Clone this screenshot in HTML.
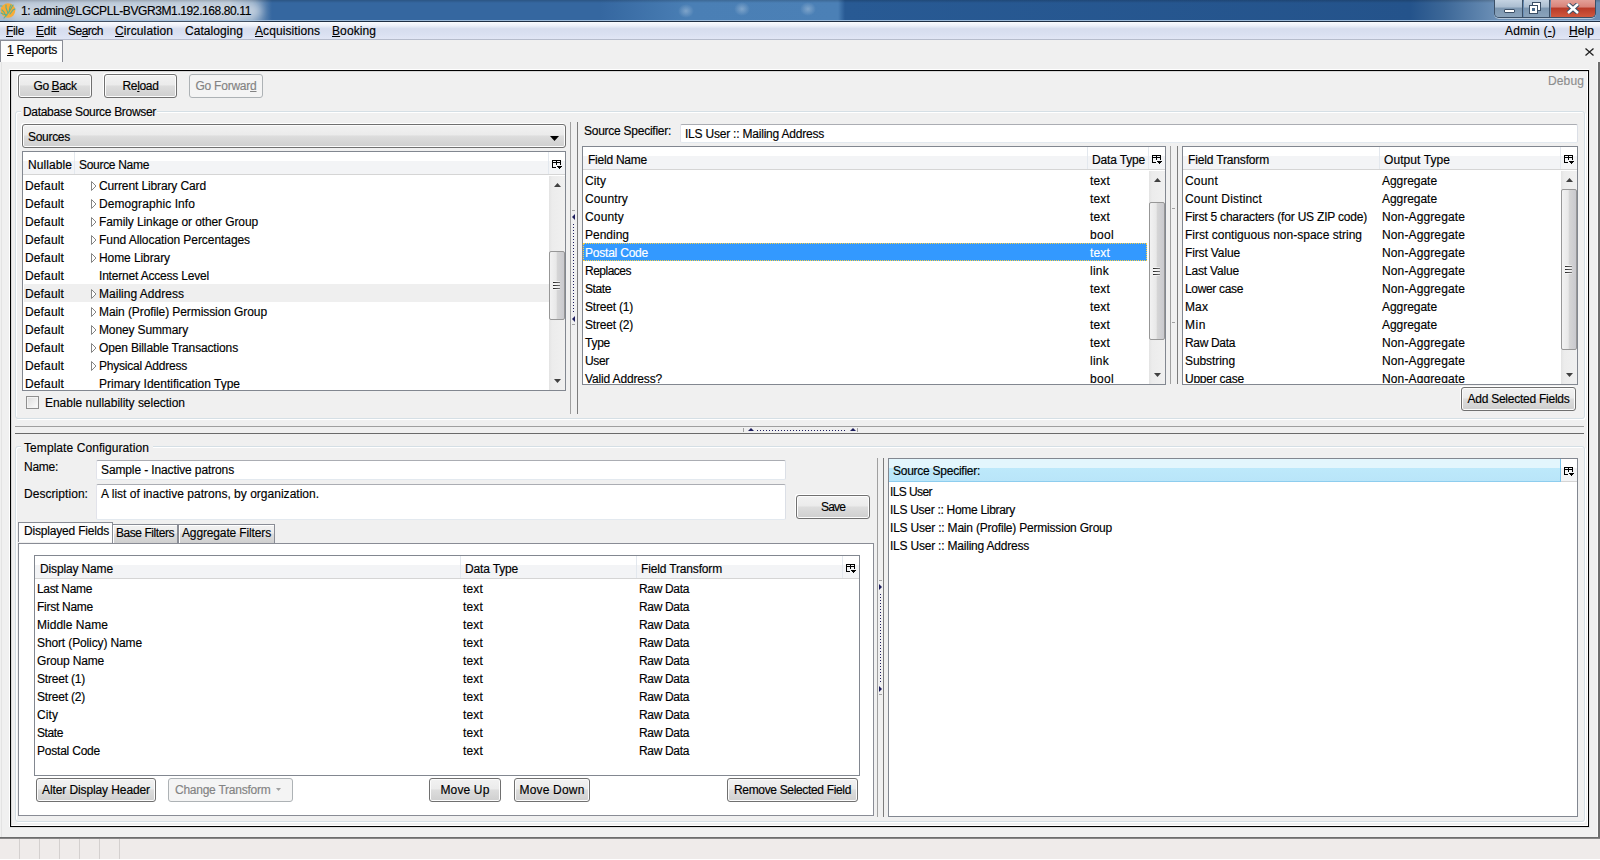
<!DOCTYPE html><html><head><meta charset="utf-8"><title>Reports</title><style>
*{margin:0;padding:0;box-sizing:border-box}
html,body{width:1600px;height:860px;overflow:hidden;background:#f0f0f0;font-family:"Liberation Sans",sans-serif;font-size:12px;color:#000;-webkit-text-stroke:0.15px currentColor}
.a{position:absolute}
.t{position:absolute;white-space:nowrap;line-height:14px;font-size:12px}
.u{text-decoration:underline}
.btn{border:1px solid #707070;border-radius:3px;background:linear-gradient(#f2f2f2 0%,#ebebeb 45%,#dddddd 50%,#cfcfcf 100%);box-shadow:inset 0 0 0 1px #fcfcfc, -1px -1px 0 #fff;text-align:center;white-space:nowrap;font-size:12px}
.btn.dis{border-color:#adb2b5;background:#f4f4f4;color:#838383;box-shadow:none}
.tree{background:#fff;border:1px solid #828790}
.hdr{background:linear-gradient(#fff 0%,#fff 40%,#f3f4f6 40%,#f3f4f6 100%);border-bottom:1px solid #d5d5d5}
.grp{border:1px solid #d5dfe5;border-radius:3px;box-shadow:1px 1px 0 #fff, inset 1px 1px 0 #fff}
.tb{background:#fff;border:1px solid;border-color:#abadb3 #dbdfe6 #e3e9ef #e2e3ea;border-radius:2px}
.sbtrack{background:linear-gradient(90deg,#e3e3e3 0,#ececec 3px,#f0f0f0 100%)}
.sbthumb{border:1px solid #979797;border-radius:2px;background:linear-gradient(90deg,#f2f2f2 0%,#e8e8e8 45%,#d6d6d6 50%,#c9c9ce 100%)}
.sel{background:#3399ff;color:#fff;outline:1px dotted #ffd040;outline-offset:-1px}
.dots{background-image:linear-gradient(90deg,#1c1c5c 1px,transparent 1px);background-size:3px 1px}
.vdots{background-image:linear-gradient(#1c1c5c 1px,transparent 1px);background-size:1px 3px}
</style></head><body>
<div class="a" style="left:0;top:0;width:1600px;height:22px;background:linear-gradient(90deg,#a9b9cb 0,#b4c3d3 230px,#8aa5c2 252px,#3567a0 272px,#3567a0 600px,#4a7fb5 690px,#4b80b6 838px,#285a94 845px,#24538b 1410px,#3d6898 1445px,#6a8eb5 1494px)"></div>
<div class="a" style="left:0;top:0;width:1600px;height:20px;background:linear-gradient(rgba(0,0,0,0.18) 0,rgba(0,0,0,0) 3px)"></div>
<div class="a" style="left:678px;top:4px;width:16px;height:14px;border-radius:50%;background:radial-gradient(rgba(170,195,220,0.55),rgba(170,195,220,0) 70%)"></div>
<div class="a" style="left:734px;top:2px;width:16px;height:14px;border-radius:50%;background:radial-gradient(rgba(170,195,220,0.55),rgba(170,195,220,0) 70%)"></div>
<div class="a" style="left:800px;top:2px;width:16px;height:14px;border-radius:50%;background:radial-gradient(rgba(170,195,220,0.55),rgba(170,195,220,0) 70%)"></div>
<div class="a " style="left:0px;top:20px;width:1600px;height:1px;background:#9bb9d8"></div>
<div class="a " style="left:0px;top:21px;width:1600px;height:1px;background:#1f2f44"></div>
<div class="a" style="left:10px;top:3px;width:252px;height:16px;border-radius:8px;background:rgba(215,224,233,0.7);filter:blur(4px)"></div>
<svg class="a" style="left:0px;top:3px" width="17" height="17" viewBox="0 0 17 17"><circle cx="8" cy="7.5" r="7.3" fill="#f8ab36"/><g stroke="#5caf8e" stroke-width="1.1" fill="none" stroke-linecap="round"><path d="M4 15L9 9L13 2"/><path d="M6 13L4 9L2 7"/><path d="M8 10L6 5L6 2"/><path d="M9 9L10 4L11 2"/><path d="M10 11L13 7L15 6"/><path d="M7 12L3 11L1 10"/><path d="M0 3L2 3"/></g></svg>
<div class="t " style="left:21px;top:4px;letter-spacing:-0.127px;color:#000;letter-spacing:-0.4px">1: admin@LGCPLL-BVGR3M1.192.168.80.11</div>
<div class="a" style="left:1494px;top:-1px;width:102px;height:19px;border:1px solid #3b4f66;border-top:none;border-radius:0 0 5px 5px;overflow:hidden;box-shadow:0 1px 0 rgba(255,255,255,0.5)"><div class="a" style="left:0;top:0;width:28px;height:18px;background:linear-gradient(#c8d6e4 0%,#aabdd0 45%,#7d97b1 50%,#8aa3bb 100%);border-right:1px solid #3b4f66"></div><div class="a" style="left:29px;top:0;width:26px;height:18px;background:linear-gradient(#c8d6e4 0%,#aabdd0 45%,#7d97b1 50%,#8aa3bb 100%);border-right:1px solid #3b4f66"></div><div class="a" style="left:56px;top:0;width:46px;height:18px;background:linear-gradient(#e4a49c 0%,#d98278 45%,#b83a28 50%,#d0583e 100%)"></div></div>
<div class="a " style="left:1504px;top:9px;width:11px;height:4px;background:#fff;border:1px solid #3b4f66;border-radius:1px"></div>
<svg class="a" style="left:1529px;top:2px" width="13" height="13" viewBox="0 0 13 13"><rect x="3.5" y="0.5" width="8" height="8" fill="#fff" stroke="#3b4f66"/><rect x="0.5" y="3.5" width="8" height="8" fill="#fff" stroke="#3b4f66"/><rect x="3" y="6" width="3" height="3" fill="#4a6a8a"/></svg>
<svg class="a" style="left:1566px;top:3px" width="14" height="11" viewBox="0 0 14 11"><path d="M2 1L12 10M12 1L2 10" stroke="#3b4f66" stroke-width="4.5"/><path d="M2 1L12 10M12 1L2 10" stroke="#fff" stroke-width="2.5"/></svg>
<div class="a" style="left:0;top:22px;width:1600px;height:18px;background:linear-gradient(#fbfcfe 0%,#eef1f9 20%,#d6ddee 40%,#dae0f1 70%,#e1e6f5 100%);border-bottom:1px solid #b6bccc"></div>
<div class="t " style="left:6px;top:24px;letter-spacing:-0.336px;"><span class="u">F</span>ile</div>
<div class="t " style="left:36px;top:24px;letter-spacing:-0.168px;"><span class="u">E</span>dit</div>
<div class="t " style="left:68px;top:24px;letter-spacing:-0.503px;">Se<span class="u">a</span>rch</div>
<div class="t " style="left:115px;top:24px;letter-spacing:0.118px;"><span class="u">C</span>irculation</div>
<div class="t " style="left:185px;top:24px;letter-spacing:0.062px;">Catalo<span class="u">g</span>ing</div>
<div class="t " style="left:255px;top:24px;letter-spacing:0.081px;"><span class="u">A</span>cquisitions</div>
<div class="t " style="left:332px;top:24px;letter-spacing:0.092px;"><span class="u">B</span>ooking</div>
<div class="t " style="left:1505px;top:24px;letter-spacing:0.184px;">Admin (<span class="u">-</span>)</div>
<div class="t " style="left:1569px;top:24px;letter-spacing:0.078px;"><span class="u">H</span>elp</div>
<div class="a " style="left:0px;top:40px;width:63px;height:22px;background:#fcfcfc;border:1px solid #898c95;border-bottom:none"></div>
<div class="t " style="left:7px;top:43px;letter-spacing:-0.224px;"><span class="u">1</span> Reports</div>
<svg class="a" style="left:1585px;top:48px" width="9" height="8" viewBox="0 0 9 8"><path d="M0.5 0.5L8.5 7.5M8.5 0.5L0.5 7.5" stroke="#222" stroke-width="1.3"/></svg>
<div class="a " style="left:1px;top:62px;width:1px;height:775px;background:#e3e3e3"></div>
<div class="a " style="left:1598px;top:62px;width:2px;height:776px;background:#6d6d6d"></div>
<div class="a " style="left:1597px;top:62px;width:1px;height:775px;background:#f8f8f8"></div>
<div class="a " style="left:0px;top:837px;width:1600px;height:2px;background:linear-gradient(#6d6d6d 50%,#858585 50%)"></div>
<div class="a " style="left:0px;top:839px;width:1600px;height:20px;background:#efebea"></div>
<div class="a " style="left:0px;top:859px;width:1600px;height:1px;background:#ffffff"></div>
<div class="a " style="left:19px;top:839px;width:1px;height:20px;background:#d4d0cf"></div>
<div class="a " style="left:39px;top:839px;width:1px;height:20px;background:#d4d0cf"></div>
<div class="a " style="left:59px;top:839px;width:1px;height:20px;background:#d4d0cf"></div>
<div class="a " style="left:79px;top:839px;width:1px;height:20px;background:#d4d0cf"></div>
<div class="a " style="left:99px;top:839px;width:1px;height:20px;background:#d4d0cf"></div>
<div class="a " style="left:119px;top:839px;width:1px;height:20px;background:#d4d0cf"></div>
<div class="a " style="left:9px;top:69px;width:1581px;height:759px;border:1px solid;border-color:#fff #e0e0e0 #e0e0e0 #fff"></div>
<div class="a " style="left:10px;top:70px;width:1579px;height:757px;border:1px solid #000"></div>
<div class="a " style="left:11px;top:71px;width:1577px;height:755px;border:1px solid;border-color:#d8d8d8 #fff #fff #d8d8d8"></div>
<div class="a btn" style="left:18px;top:74px;width:74px;height:24px;line-height:22px;letter-spacing:-0.429px;">Go <span class="u">B</span>ack</div>
<div class="a btn" style="left:104px;top:74px;width:73px;height:24px;line-height:22px;letter-spacing:-0.339px;">Re<span class="u">l</span>oad</div>
<div class="a btn dis" style="left:189px;top:74px;width:74px;height:24px;line-height:22px;letter-spacing:-0.234px;">Go Forwar<span class="u">d</span></div>
<div class="t " style="left:1548px;top:74px;letter-spacing:0.128px;color:#8d8d8d">Debug</div>
<div class="a grp" style="left:15px;top:111px;width:1570px;height:308px;"></div>
<div class="a " style="left:21px;top:104px;width:136px;height:14px;background:#f0f0f0"></div>
<div class="t " style="left:23px;top:105px;letter-spacing:-0.306px;">Database Source Browser</div>
<div class="a btn" style="left:22px;top:124px;width:544px;height:24px;text-align:left;padding-left:5px;line-height:24px;letter-spacing:-0.3px">Sources</div>
<svg class="a" style="left:550px;top:136px" width="9" height="5" viewBox="0 0 9 5"><path d="M0 0h9L4.5 5z" fill="#000"/></svg>
<div class="a tree" style="left:22px;top:151px;width:544px;height:240px;"></div>
<div class="a hdr" style="left:23px;top:152px;width:542px;height:23px"></div>
<div class="t " style="left:28px;top:158px;letter-spacing:0.078px;">Nullable</div>
<div class="a " style="left:74px;top:152px;width:1px;height:22px;background:#e3e8ee"></div>
<div class="t " style="left:79px;top:158px;letter-spacing:-0.305px;">Source Name</div>
<div class="a " style="left:548px;top:152px;width:1px;height:22px;background:#e3e8ee"></div>
<svg class="a" style="left:552px;top:160px" width="10" height="9" viewBox="0 0 10 9" shape-rendering="crispEdges"><path d="M0 0h9v1H0zM0 2h9v1H0zM0 0h1v8H0zM4 0h1v5H4zM8 0h1v5H8zM0 7h4v1H0z" fill="#000"/><path d="M5 6h5v1H5zM6 7h3v1H6zM7 8h1v1H7z" fill="#000"/></svg>
<div class="a" style="left:23px;top:176px;width:526px;height:214px;overflow:hidden">
<div class="t" style="left:2px;top:3px;letter-spacing:0.141px;">Default</div>
<svg class="a" style="left:68px;top:5px" width="6" height="10" viewBox="0 0 6 10"><path d="M0.5 0.5L5 5L0.5 9.5z" fill="#fff" stroke="#848484"/></svg>
<div class="t" style="left:76px;top:3px;letter-spacing:-0.119px;">Current Library Card</div>
<div class="t" style="left:2px;top:21px;letter-spacing:0.141px;">Default</div>
<svg class="a" style="left:68px;top:23px" width="6" height="10" viewBox="0 0 6 10"><path d="M0.5 0.5L5 5L0.5 9.5z" fill="#fff" stroke="#848484"/></svg>
<div class="t" style="left:76px;top:21px;letter-spacing:0.081px;">Demographic Info</div>
<div class="t" style="left:2px;top:39px;letter-spacing:0.141px;">Default</div>
<svg class="a" style="left:68px;top:41px" width="6" height="10" viewBox="0 0 6 10"><path d="M0.5 0.5L5 5L0.5 9.5z" fill="#fff" stroke="#848484"/></svg>
<div class="t" style="left:76px;top:39px;letter-spacing:-0.105px;">Family Linkage or other Group</div>
<div class="t" style="left:2px;top:57px;letter-spacing:0.141px;">Default</div>
<svg class="a" style="left:68px;top:59px" width="6" height="10" viewBox="0 0 6 10"><path d="M0.5 0.5L5 5L0.5 9.5z" fill="#fff" stroke="#848484"/></svg>
<div class="t" style="left:76px;top:57px;letter-spacing:-0.064px;">Fund Allocation Percentages</div>
<div class="t" style="left:2px;top:75px;letter-spacing:0.141px;">Default</div>
<svg class="a" style="left:68px;top:77px" width="6" height="10" viewBox="0 0 6 10"><path d="M0.5 0.5L5 5L0.5 9.5z" fill="#fff" stroke="#848484"/></svg>
<div class="t" style="left:76px;top:75px;letter-spacing:-0.086px;">Home Library</div>
<div class="t" style="left:2px;top:93px;letter-spacing:0.141px;">Default</div>
<div class="t" style="left:76px;top:93px;letter-spacing:-0.192px;">Internet Access Level</div>
<div class="a" style="left:1px;top:108px;width:525px;height:18px;background:#efefef"></div>
<div class="t" style="left:2px;top:111px;letter-spacing:0.141px;">Default</div>
<svg class="a" style="left:68px;top:113px" width="6" height="10" viewBox="0 0 6 10"><path d="M0.5 0.5L5 5L0.5 9.5z" fill="#fff" stroke="#848484"/></svg>
<div class="t" style="left:76px;top:111px;letter-spacing:0.019px;">Mailing Address</div>
<div class="t" style="left:2px;top:129px;letter-spacing:0.141px;">Default</div>
<svg class="a" style="left:68px;top:131px" width="6" height="10" viewBox="0 0 6 10"><path d="M0.5 0.5L5 5L0.5 9.5z" fill="#fff" stroke="#848484"/></svg>
<div class="t" style="left:76px;top:129px;letter-spacing:-0.088px;">Main (Profile) Permission Group</div>
<div class="t" style="left:2px;top:147px;letter-spacing:0.141px;">Default</div>
<svg class="a" style="left:68px;top:149px" width="6" height="10" viewBox="0 0 6 10"><path d="M0.5 0.5L5 5L0.5 9.5z" fill="#fff" stroke="#848484"/></svg>
<div class="t" style="left:76px;top:147px;letter-spacing:-0.130px;">Money Summary</div>
<div class="t" style="left:2px;top:165px;letter-spacing:0.141px;">Default</div>
<svg class="a" style="left:68px;top:167px" width="6" height="10" viewBox="0 0 6 10"><path d="M0.5 0.5L5 5L0.5 9.5z" fill="#fff" stroke="#848484"/></svg>
<div class="t" style="left:76px;top:165px;letter-spacing:-0.144px;">Open Billable Transactions</div>
<div class="t" style="left:2px;top:183px;letter-spacing:0.141px;">Default</div>
<svg class="a" style="left:68px;top:185px" width="6" height="10" viewBox="0 0 6 10"><path d="M0.5 0.5L5 5L0.5 9.5z" fill="#fff" stroke="#848484"/></svg>
<div class="t" style="left:76px;top:183px;letter-spacing:-0.211px;">Physical Address</div>
<div class="t" style="left:2px;top:201px;letter-spacing:0.141px;">Default</div>
<div class="t" style="left:76px;top:201px;letter-spacing:-0.006px;">Primary Identification Type</div>
</div>
<div class="a sbtrack" style="left:549px;top:176px;width:16px;height:214px"></div>
<svg class="a" style="left:554px;top:183px" width="7" height="4" viewBox="0 0 7 4"><path d="M0 4L3.5 0L7 4z" fill="#404040"/></svg>
<svg class="a" style="left:554px;top:379px" width="7" height="4" viewBox="0 0 7 4"><path d="M0 0L3.5 4L7 0z" fill="#404040"/></svg>
<div class="a sbthumb" style="left:549px;top:251px;width:16px;height:69px"></div>
<div class="a " style="left:553px;top:281px;width:7px;height:3px;background:rgba(255,255,255,0.6);border-radius:1px"></div>
<div class="a " style="left:553px;top:284px;width:7px;height:3px;background:rgba(255,255,255,0.6);border-radius:1px"></div>
<div class="a " style="left:553px;top:287px;width:7px;height:3px;background:rgba(255,255,255,0.6);border-radius:1px"></div>
<div class="a " style="left:553px;top:282px;width:7px;height:1px;background:linear-gradient(90deg,#222,#777)"></div>
<div class="a " style="left:553px;top:285px;width:7px;height:1px;background:linear-gradient(90deg,#222,#777)"></div>
<div class="a " style="left:553px;top:288px;width:7px;height:1px;background:linear-gradient(90deg,#222,#777)"></div>
<div class="a " style="left:26px;top:396px;width:13px;height:13px;border:1px solid #8f8f8f;background:linear-gradient(135deg,#dcdcdc,#fdfdfd);box-shadow:inset 0 0 0 1px #f4f4f4"></div>
<div class="t " style="left:45px;top:396px;letter-spacing:-0.027px;">Enable nullability selection</div>
<div class="a " style="left:570px;top:122px;width:1px;height:292px;background:#a0a0a0"></div>
<div class="a " style="left:577px;top:122px;width:1px;height:292px;background:#7c7c7c"></div>
<div class="a " style="left:572px;top:210px;width:3px;height:1px;background:#a0a0a0"></div>
<div class="a " style="left:572px;top:324px;width:3px;height:1px;background:#a0a0a0"></div>
<svg class="a" style="left:572px;top:214px" width="3" height="6" viewBox="0 0 3 6"><path d="M3 0L0 3L3 6z" fill="#1c1c5c"/></svg>
<svg class="a" style="left:572px;top:316px" width="3" height="6" viewBox="0 0 3 6"><path d="M3 0L0 3L3 6z" fill="#1c1c5c"/></svg>
<div class="a vdots" style="left:573px;top:224px;width:1px;height:90px;"></div>
<div class="t " style="left:584px;top:124px;letter-spacing:-0.256px;">Source Specifier:</div>
<div class="a tb" style="left:680px;top:124px;width:898px;height:19px;"></div>
<div class="t " style="left:685px;top:127px;letter-spacing:-0.211px;">ILS User :: Mailing Address</div>
<div class="a tree" style="left:582px;top:146px;width:584px;height:239px;"></div>
<div class="a hdr" style="left:583px;top:147px;width:582px;height:23px"></div>
<div class="t " style="left:588px;top:153px;letter-spacing:-0.236px;">Field Name</div>
<div class="a " style="left:1087px;top:147px;width:1px;height:22px;background:#e3e8ee"></div>
<div class="t " style="left:1092px;top:153px;letter-spacing:-0.163px;">Data Type</div>
<div class="a " style="left:1148px;top:147px;width:1px;height:22px;background:#e3e8ee"></div>
<svg class="a" style="left:1152px;top:155px" width="10" height="9" viewBox="0 0 10 9" shape-rendering="crispEdges"><path d="M0 0h9v1H0zM0 2h9v1H0zM0 0h1v8H0zM4 0h1v5H4zM8 0h1v5H8zM0 7h4v1H0z" fill="#000"/><path d="M5 6h5v1H5zM6 7h3v1H6zM7 8h1v1H7z" fill="#000"/></svg>
<div class="a" style="left:583px;top:171px;width:566px;height:212px;overflow:hidden">
<div class="t" style="left:2px;top:3px;letter-spacing:0.082px;">City</div>
<div class="t" style="left:507px;top:3px;letter-spacing:0.168px;">text</div>
<div class="t" style="left:2px;top:21px;letter-spacing:0.141px;">Country</div>
<div class="t" style="left:507px;top:21px;letter-spacing:0.168px;">text</div>
<div class="t" style="left:2px;top:39px;letter-spacing:0.164px;">County</div>
<div class="t" style="left:507px;top:39px;letter-spacing:0.168px;">text</div>
<div class="t" style="left:2px;top:57px;letter-spacing:-0.004px;">Pending</div>
<div class="t" style="left:507px;top:57px;letter-spacing:0.328px;">bool</div>
<div class="a sel" style="left:0;top:72px;width:564px;height:18px"></div>
<div class="t" style="left:2px;top:75px;letter-spacing:-0.214px;color:#fff">Postal Code</div>
<div class="t" style="left:507px;top:75px;letter-spacing:0.168px;color:#fff">text</div>
<div class="t" style="left:2px;top:93px;letter-spacing:-0.504px;">Replaces</div>
<div class="t" style="left:507px;top:93px;letter-spacing:0.246px;">link</div>
<div class="t" style="left:2px;top:111px;letter-spacing:-0.400px;">State</div>
<div class="t" style="left:507px;top:111px;letter-spacing:0.168px;">text</div>
<div class="t" style="left:2px;top:129px;letter-spacing:-0.200px;">Street (1)</div>
<div class="t" style="left:507px;top:129px;letter-spacing:0.168px;">text</div>
<div class="t" style="left:2px;top:147px;letter-spacing:-0.200px;">Street (2)</div>
<div class="t" style="left:507px;top:147px;letter-spacing:0.168px;">text</div>
<div class="t" style="left:2px;top:165px;letter-spacing:-0.254px;">Type</div>
<div class="t" style="left:507px;top:165px;letter-spacing:0.168px;">text</div>
<div class="t" style="left:2px;top:183px;letter-spacing:-0.336px;">User</div>
<div class="t" style="left:507px;top:183px;letter-spacing:0.246px;">link</div>
<div class="t" style="left:2px;top:201px;letter-spacing:-0.154px;">Valid Address?</div>
<div class="t" style="left:507px;top:201px;letter-spacing:0.328px;">bool</div>
</div>
<div class="a sbtrack" style="left:1149px;top:171px;width:16px;height:213px"></div>
<svg class="a" style="left:1154px;top:178px" width="7" height="4" viewBox="0 0 7 4"><path d="M0 4L3.5 0L7 4z" fill="#404040"/></svg>
<svg class="a" style="left:1154px;top:373px" width="7" height="4" viewBox="0 0 7 4"><path d="M0 0L3.5 4L7 0z" fill="#404040"/></svg>
<div class="a sbthumb" style="left:1149px;top:202px;width:16px;height:138px"></div>
<div class="a " style="left:1153px;top:267px;width:7px;height:3px;background:rgba(255,255,255,0.6);border-radius:1px"></div>
<div class="a " style="left:1153px;top:270px;width:7px;height:3px;background:rgba(255,255,255,0.6);border-radius:1px"></div>
<div class="a " style="left:1153px;top:273px;width:7px;height:3px;background:rgba(255,255,255,0.6);border-radius:1px"></div>
<div class="a " style="left:1153px;top:268px;width:7px;height:1px;background:linear-gradient(90deg,#222,#777)"></div>
<div class="a " style="left:1153px;top:271px;width:7px;height:1px;background:linear-gradient(90deg,#222,#777)"></div>
<div class="a " style="left:1153px;top:274px;width:7px;height:1px;background:linear-gradient(90deg,#222,#777)"></div>
<div class="a " style="left:1170px;top:146px;width:1px;height:238px;background:#a0a0a0"></div>
<div class="a " style="left:1177px;top:146px;width:1px;height:238px;background:#7c7c7c"></div>
<div class="a " style="left:1172px;top:208px;width:3px;height:1px;background:#a0a0a0"></div>
<div class="a " style="left:1172px;top:322px;width:3px;height:1px;background:#a0a0a0"></div>
<div class="a tree" style="left:1182px;top:146px;width:396px;height:239px;"></div>
<div class="a hdr" style="left:1183px;top:147px;width:394px;height:23px"></div>
<div class="t " style="left:1188px;top:153px;letter-spacing:-0.157px;">Field Transform</div>
<div class="a " style="left:1379px;top:147px;width:1px;height:22px;background:#e3e8ee"></div>
<div class="t " style="left:1384px;top:153px;letter-spacing:0.080px;">Output Type</div>
<div class="a " style="left:1560px;top:147px;width:1px;height:22px;background:#e3e8ee"></div>
<svg class="a" style="left:1564px;top:155px" width="10" height="9" viewBox="0 0 10 9" shape-rendering="crispEdges"><path d="M0 0h9v1H0zM0 2h9v1H0zM0 0h1v8H0zM4 0h1v5H4zM8 0h1v5H8zM0 7h4v1H0z" fill="#000"/><path d="M5 6h5v1H5zM6 7h3v1H6zM7 8h1v1H7z" fill="#000"/></svg>
<div class="a" style="left:1183px;top:171px;width:377px;height:212px;overflow:hidden">
<div class="t" style="left:2px;top:3px;letter-spacing:0.197px;">Count</div>
<div class="t" style="left:199px;top:3px;letter-spacing:-0.040px;">Aggregate</div>
<div class="t" style="left:2px;top:21px;letter-spacing:0.165px;">Count Distinct</div>
<div class="t" style="left:199px;top:21px;letter-spacing:-0.040px;">Aggregate</div>
<div class="t" style="left:2px;top:39px;letter-spacing:-0.197px;">First 5 characters (for US ZIP code)</div>
<div class="t" style="left:199px;top:39px;letter-spacing:0.125px;">Non-Aggregate</div>
<div class="t" style="left:2px;top:57px;letter-spacing:0.009px;">First contiguous non-space string</div>
<div class="t" style="left:199px;top:57px;letter-spacing:0.125px;">Non-Aggregate</div>
<div class="t" style="left:2px;top:75px;letter-spacing:-0.132px;">First Value</div>
<div class="t" style="left:199px;top:75px;letter-spacing:0.125px;">Non-Aggregate</div>
<div class="t" style="left:2px;top:93px;letter-spacing:-0.180px;">Last Value</div>
<div class="t" style="left:199px;top:93px;letter-spacing:0.125px;">Non-Aggregate</div>
<div class="t" style="left:2px;top:111px;letter-spacing:-0.336px;">Lower case</div>
<div class="t" style="left:199px;top:111px;letter-spacing:0.125px;">Non-Aggregate</div>
<div class="t" style="left:2px;top:129px;letter-spacing:0.109px;">Max</div>
<div class="t" style="left:199px;top:129px;letter-spacing:-0.040px;">Aggregate</div>
<div class="t" style="left:2px;top:147px;letter-spacing:0.552px;">Min</div>
<div class="t" style="left:199px;top:147px;letter-spacing:-0.040px;">Aggregate</div>
<div class="t" style="left:2px;top:165px;letter-spacing:-0.336px;">Raw Data</div>
<div class="t" style="left:199px;top:165px;letter-spacing:0.125px;">Non-Aggregate</div>
<div class="t" style="left:2px;top:183px;letter-spacing:-0.076px;">Substring</div>
<div class="t" style="left:199px;top:183px;letter-spacing:0.125px;">Non-Aggregate</div>
<div class="t" style="left:2px;top:201px;letter-spacing:-0.236px;">Upper case</div>
<div class="t" style="left:199px;top:201px;letter-spacing:0.125px;">Non-Aggregate</div>
</div>
<div class="a sbtrack" style="left:1561px;top:171px;width:16px;height:213px"></div>
<svg class="a" style="left:1566px;top:178px" width="7" height="4" viewBox="0 0 7 4"><path d="M0 4L3.5 0L7 4z" fill="#404040"/></svg>
<svg class="a" style="left:1566px;top:373px" width="7" height="4" viewBox="0 0 7 4"><path d="M0 0L3.5 4L7 0z" fill="#404040"/></svg>
<div class="a sbthumb" style="left:1561px;top:189px;width:16px;height:161px"></div>
<div class="a " style="left:1565px;top:265px;width:7px;height:3px;background:rgba(255,255,255,0.6);border-radius:1px"></div>
<div class="a " style="left:1565px;top:268px;width:7px;height:3px;background:rgba(255,255,255,0.6);border-radius:1px"></div>
<div class="a " style="left:1565px;top:271px;width:7px;height:3px;background:rgba(255,255,255,0.6);border-radius:1px"></div>
<div class="a " style="left:1565px;top:266px;width:7px;height:1px;background:linear-gradient(90deg,#222,#777)"></div>
<div class="a " style="left:1565px;top:269px;width:7px;height:1px;background:linear-gradient(90deg,#222,#777)"></div>
<div class="a " style="left:1565px;top:272px;width:7px;height:1px;background:linear-gradient(90deg,#222,#777)"></div>
<div class="a btn" style="left:1461px;top:387px;width:115px;height:24px;line-height:22px;letter-spacing:-0.248px;">Add Selected Fields</div>
<div class="a " style="left:15px;top:426px;width:1569px;height:1px;background:#a0a0a0"></div>
<div class="a " style="left:15px;top:433px;width:1569px;height:1px;background:#6a6a6a"></div>
<div class="a " style="left:743px;top:428px;width:1px;height:4px;background:#a0a0a0"></div>
<div class="a " style="left:857px;top:428px;width:1px;height:4px;background:#a0a0a0"></div>
<svg class="a" style="left:748px;top:428px" width="6" height="3" viewBox="0 0 6 3"><path d="M0 3L3 0L6 3z" fill="#1c1c5c"/></svg>
<svg class="a" style="left:850px;top:428px" width="6" height="3" viewBox="0 0 6 3"><path d="M0 3L3 0L6 3z" fill="#1c1c5c"/></svg>
<div class="a dots" style="left:757px;top:430px;width:90px;height:1px;"></div>
<div class="a grp" style="left:15px;top:446px;width:1570px;height:376px;"></div>
<div class="a " style="left:21px;top:439px;width:132px;height:14px;background:#f0f0f0"></div>
<div class="t " style="left:24px;top:441px;letter-spacing:0.073px;">Template Configuration</div>
<div class="t " style="left:24px;top:460px;letter-spacing:-0.269px;">Name:</div>
<div class="a tb" style="left:96px;top:460px;width:690px;height:20px;"></div>
<div class="t " style="left:101px;top:463px;letter-spacing:-0.121px;">Sample - Inactive patrons</div>
<div class="t " style="left:24px;top:487px;letter-spacing:0.053px;">Description:</div>
<div class="a tb" style="left:96px;top:484px;width:690px;height:36px;"></div>
<div class="t " style="left:101px;top:487px;letter-spacing:0.014px;">A list of inactive patrons, by organization.</div>
<div class="a btn" style="left:796px;top:495px;width:74px;height:24px;line-height:22px;letter-spacing:-0.836px;">Save</div>
<div class="a " style="left:18px;top:543px;width:856px;height:273px;background:#fff;border:1px solid #898c95"></div>
<div class="a" style="left:112px;top:524px;width:66px;height:19px;border:1px solid #898c95;border-bottom:none;background:linear-gradient(#f2f2f2 0%,#ebebeb 45%,#dddddd 50%,#cfcfcf 100%);box-shadow:inset 1px 1px 0 #fff"></div>
<div class="a" style="left:178px;top:524px;width:97px;height:19px;border:1px solid #898c95;border-bottom:none;background:linear-gradient(#f2f2f2 0%,#ebebeb 45%,#dddddd 50%,#cfcfcf 100%);box-shadow:inset 1px 1px 0 #fff"></div>
<div class="a" style="left:18px;top:522px;width:95px;height:20px;border:1px solid #898c95;border-bottom:none;background:#fcfcfc"></div>
<div class="t " style="left:24px;top:524px;letter-spacing:-0.190px;">Displayed Fields</div>
<div class="t " style="left:116px;top:526px;letter-spacing:-0.445px;">Base Filters</div>
<div class="t " style="left:182px;top:526px;letter-spacing:-0.139px;">Aggregate Filters</div>
<div class="a tree" style="left:34px;top:555px;width:826px;height:221px;"></div>
<div class="a hdr" style="left:35px;top:556px;width:824px;height:23px"></div>
<div class="t " style="left:40px;top:562px;letter-spacing:-0.142px;">Display Name</div>
<div class="a " style="left:460px;top:556px;width:1px;height:22px;background:#e3e8ee"></div>
<div class="t " style="left:465px;top:562px;letter-spacing:-0.163px;">Data Type</div>
<div class="a " style="left:636px;top:556px;width:1px;height:22px;background:#e3e8ee"></div>
<div class="t " style="left:641px;top:562px;letter-spacing:-0.157px;">Field Transform</div>
<div class="a " style="left:842px;top:556px;width:1px;height:22px;background:#e3e8ee"></div>
<svg class="a" style="left:846px;top:564px" width="10" height="9" viewBox="0 0 10 9" shape-rendering="crispEdges"><path d="M0 0h9v1H0zM0 2h9v1H0zM0 0h1v8H0zM4 0h1v5H4zM8 0h1v5H8zM0 7h4v1H0z" fill="#000"/><path d="M5 6h5v1H5zM6 7h3v1H6zM7 8h1v1H7z" fill="#000"/></svg>
<div class="t " style="left:37px;top:582px;letter-spacing:-0.335px;">Last Name</div>
<div class="t " style="left:463px;top:582px;letter-spacing:0.168px;">text</div>
<div class="t " style="left:639px;top:582px;letter-spacing:-0.336px;">Raw Data</div>
<div class="t " style="left:37px;top:600px;letter-spacing:-0.267px;">First Name</div>
<div class="t " style="left:463px;top:600px;letter-spacing:0.168px;">text</div>
<div class="t " style="left:639px;top:600px;letter-spacing:-0.336px;">Raw Data</div>
<div class="t " style="left:37px;top:618px;letter-spacing:0.027px;">Middle Name</div>
<div class="t " style="left:463px;top:618px;letter-spacing:0.168px;">text</div>
<div class="t " style="left:639px;top:618px;letter-spacing:-0.336px;">Raw Data</div>
<div class="t " style="left:37px;top:636px;letter-spacing:-0.124px;">Short (Policy) Name</div>
<div class="t " style="left:463px;top:636px;letter-spacing:0.168px;">text</div>
<div class="t " style="left:639px;top:636px;letter-spacing:-0.336px;">Raw Data</div>
<div class="t " style="left:37px;top:654px;letter-spacing:-0.169px;">Group Name</div>
<div class="t " style="left:463px;top:654px;letter-spacing:0.168px;">text</div>
<div class="t " style="left:639px;top:654px;letter-spacing:-0.336px;">Raw Data</div>
<div class="t " style="left:37px;top:672px;letter-spacing:-0.200px;">Street (1)</div>
<div class="t " style="left:463px;top:672px;letter-spacing:0.168px;">text</div>
<div class="t " style="left:639px;top:672px;letter-spacing:-0.336px;">Raw Data</div>
<div class="t " style="left:37px;top:690px;letter-spacing:-0.200px;">Street (2)</div>
<div class="t " style="left:463px;top:690px;letter-spacing:0.168px;">text</div>
<div class="t " style="left:639px;top:690px;letter-spacing:-0.336px;">Raw Data</div>
<div class="t " style="left:37px;top:708px;letter-spacing:0.082px;">City</div>
<div class="t " style="left:463px;top:708px;letter-spacing:0.168px;">text</div>
<div class="t " style="left:639px;top:708px;letter-spacing:-0.336px;">Raw Data</div>
<div class="t " style="left:37px;top:726px;letter-spacing:-0.400px;">State</div>
<div class="t " style="left:463px;top:726px;letter-spacing:0.168px;">text</div>
<div class="t " style="left:639px;top:726px;letter-spacing:-0.336px;">Raw Data</div>
<div class="t " style="left:37px;top:744px;letter-spacing:-0.214px;">Postal Code</div>
<div class="t " style="left:463px;top:744px;letter-spacing:0.168px;">text</div>
<div class="t " style="left:639px;top:744px;letter-spacing:-0.336px;">Raw Data</div>
<div class="a btn" style="left:36px;top:778px;width:120px;height:24px;line-height:22px;letter-spacing:-0.102px;">Alter Display Header</div>
<div class="a btn dis" style="left:168px;top:778px;width:125px;height:24px;line-height:22px;text-align:left;padding-left:6px;letter-spacing:-0.25px">Change Transform</div>
<svg class="a" style="left:276px;top:788px" width="5" height="3" viewBox="0 0 5 3"><path d="M0 0h5L2.5 3z" fill="#a0a0a0"/></svg>
<div class="a btn" style="left:429px;top:778px;width:72px;height:24px;line-height:22px;letter-spacing:0.141px;">Move Up</div>
<div class="a btn" style="left:514px;top:778px;width:76px;height:24px;line-height:22px;letter-spacing:0.182px;">Move Down</div>
<div class="a btn" style="left:727px;top:778px;width:131px;height:24px;line-height:22px;letter-spacing:-0.336px;">Remove Selected Field</div>
<div class="a " style="left:877px;top:458px;width:1px;height:359px;background:#a0a0a0"></div>
<div class="a " style="left:883px;top:458px;width:1px;height:359px;background:#7c7c7c"></div>
<div class="a " style="left:879px;top:580px;width:3px;height:1px;background:#a0a0a0"></div>
<div class="a " style="left:879px;top:694px;width:3px;height:1px;background:#a0a0a0"></div>
<svg class="a" style="left:879px;top:584px" width="3" height="6" viewBox="0 0 3 6"><path d="M0 0L3 3L0 6z" fill="#1c1c5c"/></svg>
<svg class="a" style="left:879px;top:686px" width="3" height="6" viewBox="0 0 3 6"><path d="M0 0L3 3L0 6z" fill="#1c1c5c"/></svg>
<div class="a vdots" style="left:880px;top:594px;width:1px;height:90px;"></div>
<div class="a tree" style="left:888px;top:458px;width:690px;height:359px;"></div>
<div class="a" style="left:889px;top:459px;width:672px;height:23px;background:linear-gradient(#e3f6fd 0%,#e3f6fd 40%,#bde9fb 40%,#b9e5f9 100%);border-bottom:1px solid #8ecdee;border-right:1px solid #7cc3ea"></div>
<div class="a hdr" style="left:1561px;top:459px;width:16px;height:23px"></div>
<svg class="a" style="left:1564px;top:467px" width="10" height="9" viewBox="0 0 10 9" shape-rendering="crispEdges"><path d="M0 0h9v1H0zM0 2h9v1H0zM0 0h1v8H0zM4 0h1v5H4zM8 0h1v5H8zM0 7h4v1H0z" fill="#000"/><path d="M5 6h5v1H5zM6 7h3v1H6zM7 8h1v1H7z" fill="#000"/></svg>
<div class="t " style="left:893px;top:464px;letter-spacing:-0.256px;">Source Specifier:</div>
<div class="t " style="left:890px;top:485px;letter-spacing:-0.584px;">ILS User</div>
<div class="t " style="left:890px;top:503px;letter-spacing:-0.292px;">ILS User :: Home Library</div>
<div class="t " style="left:890px;top:521px;letter-spacing:-0.202px;">ILS User :: Main (Profile) Permission Group</div>
<div class="t " style="left:890px;top:539px;letter-spacing:-0.211px;">ILS User :: Mailing Address</div>
</body></html>
